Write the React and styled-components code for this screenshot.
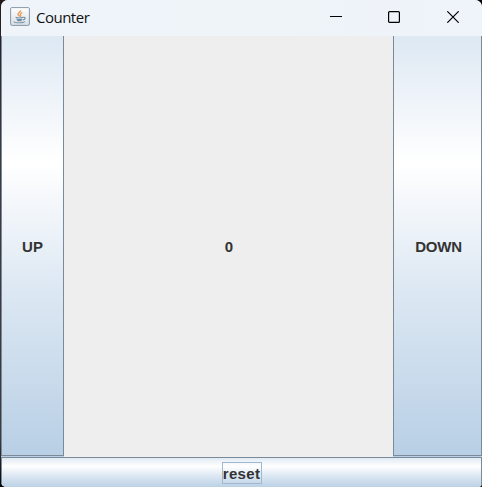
import React from "react";
import styled, { createGlobalStyle } from "styled-components";

const GlobalStyle = createGlobalStyle`
  * { box-sizing: border-box; }
  body { margin: 0; background: #050506; overflow: hidden; }
`;

const Desktop = styled.div`
  width: 482px;
  height: 487px;
  padding-left: 1px;
  background: linear-gradient(#231a1c, #3e3b40 30%, #3e3b40 90%, #050506);
`;

const Corners = styled.div`
  height: 487px;
  background: #050506;
  border-radius: 8px 0 0 7px;
`;

const Window = styled.div`
  display: flex;
  flex-direction: column;
  height: 487px;
  overflow: hidden;
  border-radius: 7px 7px 4px 5px;
  background: #eeeeee;
`;

const TitleBar = styled.header`
  display: flex;
  align-items: center;
  height: 36px;
  flex: none;
  padding: 0 0 2px 9px;
  background: linear-gradient(90deg, #eef4f9, #eff4f9 60%, #eff3fa);
`;

const Title = styled.span`
  flex: 1;
  margin-left: 6px;
  font: 15px/20px "Open Sans", "Noto Sans", sans-serif;
  letter-spacing: -0.5px;
  color: #111;
`;

const Controls = styled.div`
  display: flex;
`;

const Control = styled.button`
  display: grid;
  place-items: center;
  width: 58.5px;
  height: 34px;
  padding: 0;
  border: 0;
  background: transparent;
`;

const Content = styled.main`
  display: flex;
  height: 421px;
  flex: none;
`;

const MetalButton = styled.button`
  width: ${(p) => p.$width};
  height: ${(p) => p.$height};
  flex: none;
  padding: ${(p) => p.$inset || 0};
  border: solid #7a8a99;
  border-width: ${(p) => p.$edges};
  border-radius: 0;
  background: linear-gradient(#dde8f3, #ffffff 30%, #dde8f3 60%, #b8cfe5);
  background-origin: border-box;
  box-shadow: ${(p) => (p.$glow ? "0 1px #b8cfe5" : "none")};
  font: bold 15px/17px "Liberation Sans", Arial, sans-serif;
  letter-spacing: ${(p) => p.$tracking || "normal"};
  color: #333333;
`;

const Count = styled.output`
  display: grid;
  place-items: center;
  flex: 1;
  padding-left: 1px;
  font: bold 15px/17px "Liberation Sans", Arial, sans-serif;
  color: #333333;
`;

const FocusLabel = styled.span`
  display: block;
  width: 40px;
  height: 22px;
  margin: 0 auto;
  border: 1px solid #a3b8cc;
  line-height: 21px;
  letter-spacing: 0.3px;
  white-space: nowrap;
`;

function JavaIcon() {
  return (
    <svg width="20" height="20" viewBox="0 0 20 20" fill="none">
      <defs>
        <linearGradient id="tile" x2="0" y2="1">
          <stop stopColor="#ffffff" />
          <stop offset="1" stopColor="#d9dee3" />
        </linearGradient>
      </defs>
      <rect x=".6" y=".6" width="18.8" height="17.8" rx="1.2" fill="url(#tile)" stroke="#8498a9" />
      <path d="M10.6 3.2c.8 1.7-3.1 2.5-2.6 4.3.2.8 1.2 1.4 1.8 2M12.4 5.6c-1.8.8-2.6 1.6-1.9 2.6.5.7.2 1.2-.5 1.6" stroke="#e9a060" strokeWidth="1.4" />
      <path d="M5.6 10.3c1.8.7 5.4.7 7.4 0M6.4 12c1.7.6 4.4.6 6 0M7.1 13.4c1.4.4 3.4.4 4.6 0M13.2 10.3c2.6-.5 2.4 2-.2 2.5" stroke="#6d8fa8" strokeWidth="1.2" />
      <path d="M4.4 14.6c-1 .6 1.4 1.2 4.9 1.2s5.8-.7 5.2-1.4" stroke="#7f9db2" strokeWidth="1.1" />
    </svg>
  );
}

export default function App() {
  return (
    <Desktop>
      <GlobalStyle />
      <Corners>
        <Window>
          <TitleBar>
            <JavaIcon />
            <Title>Counter</Title>
            <Controls>
              <Control aria-label="Minimize">
                <svg width="12" height="12" viewBox="0 0 12 12">
                  <path d="M0 5.5h12" stroke="#000" />
                </svg>
              </Control>
              <Control aria-label="Maximize">
                <svg width="12" height="12" viewBox="0 0 12 12" fill="none">
                  <rect x=".6" y=".6" width="10.8" height="10.8" rx="1" stroke="#000" strokeWidth="1.2" />
                </svg>
              </Control>
              <Control aria-label="Close">
                <svg width="12" height="12" viewBox="0 0 12 12">
                  <path d="M.3.3l11.4 11.4M11.7.3L.3 11.7" stroke="#000" strokeWidth="1.2" />
                </svg>
              </Control>
            </Controls>
          </TitleBar>
          <Content>
            <MetalButton $width="63px" $height="420px" $edges="0 1px 1px" $inset="2px 0 0" $glow>
              UP
            </MetalButton>
            <Count>0</Count>
            <MetalButton $width="89px" $height="420px" $edges="0 1px 1px" $inset="2px 0 0 2px" $tracking="-0.2px" $glow>
              DOWN
            </MetalButton>
          </Content>
          <MetalButton $width="100%" $height="31px" $edges="1px 1px 0">
            <FocusLabel>reset</FocusLabel>
          </MetalButton>
        </Window>
      </Corners>
    </Desktop>
  );
}
